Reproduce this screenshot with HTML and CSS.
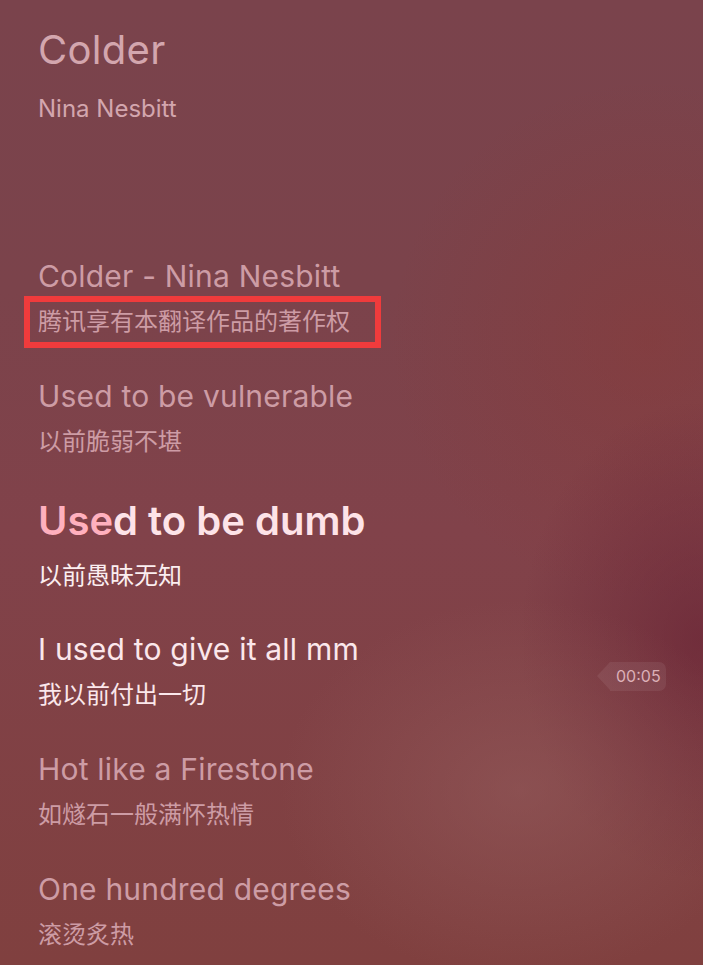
FILE: index.html
```html
<!doctype html>
<html>
<head>
  <meta charset="utf-8">
  <title>Colder</title>
  <link rel="stylesheet" href="styles.css">
</head>
<body>
  <div class="player">
    <div class="song">
      <h1 class="title">Colder</h1>
      <div class="artist">Nina Nesbitt</div>
    </div>

    <div class="lyrics">
      <div class="line">
        <div class="en">Colder - Nina Nesbitt</div>
        <div class="zh marked">腾讯享有本翻译作品的著作权</div>
      </div>
      <div class="line">
        <div class="en">Used to be vulnerable</div>
        <div class="zh">以前脆弱不堪</div>
      </div>
      <div class="line current">
        <div class="en"><span class="sung">Use</span>d to be dumb</div>
        <div class="zh">以前愚昧无知</div>
      </div>
      <div class="line next">
        <div class="en">I used to give it all mm</div>
        <div class="zh">我以前付出一切</div>
      </div>
      <div class="line">
        <div class="en">Hot like a Firestone</div>
        <div class="zh">如燧石一般满怀热情</div>
      </div>
      <div class="line">
        <div class="en">One hundred degrees</div>
        <div class="zh">滚烫炙热</div>
      </div>
    </div>

    <div class="time">00:05</div>
  </div>
</body>
</html>
```

FILE: styles.css
```css
html, body {
  margin: 0;
  height: 100%;
}
body {
  font-family: Inter, "Noto Sans CJK SC", sans-serif;
  color: #cd9ca5;
  background-color: #7c3f46;
  background-image:
    radial-gradient(ellipse 240px 190px at 520px 790px, rgba(150,95,95,0.5), rgba(150,95,95,0) 100%),
    radial-gradient(ellipse 180px 240px at 700px 640px, rgba(100,30,50,0.55), rgba(100,30,50,0) 100%),
    radial-gradient(ellipse 260px 260px at 650px 340px, rgba(140,55,50,0.4), rgba(140,55,50,0) 100%),
    linear-gradient(180deg, #7a434c 0%, #7b434b 30%, #81424a 55%, #80403f 100%);
  overflow: hidden;
}
.player {
  position: relative;
  height: 965px;
  padding-left: 38px;
}
.song {
  padding-top: 26px;
}
.title {
  margin: 0;
  font-weight: 400;
  font-size: 40px;
  line-height: 48px;
  letter-spacing: 0.3px;
  color: #d3a6ae;
}
.artist {
  margin-top: 20px;
  font-size: 24px;
  line-height: 30px;
  color: #d3a6ae;
}
.lyrics {
  margin-top: 133px;
}
.line {
  height: 120px;
}
.en {
  font-size: 30px;
  line-height: 38px;
  letter-spacing: 0.2px;
  color: #cd9ca5;
}
.zh {
  margin-top: 10px;
  font-family: "Noto Sans CJK SC", sans-serif;
  font-size: 24px;
  line-height: 30px;
  color: #cd9ca5;
}
.marked {
  position: relative;
  display: inline-block;
}
.marked::after {
  content: "";
  position: absolute;
  left: -14px;
  right: -31px;
  top: -9px;
  bottom: -13px;
  border: 6px solid #f03b3c;
}
.current {
  height: 133px;
}
.current .en {
  font-size: 40px;
  line-height: 48px;
  font-weight: 600;
  letter-spacing: 0;
  color: #fde3e8;
}
.current .en .sung {
  color: #ffb0be;
}
.current .zh {
  margin-top: 14px;
  color: #fbeef0;
}
.next .en, .next .zh {
  color: #fbe7eb;
}
.time {
  position: absolute;
  left: 610px;
  top: 662px;
  height: 29px;
  padding: 0 5px 0 6px;
  border-radius: 0 7px 7px 0;
  font-family: Inter, sans-serif;
  font-size: 16px;
  line-height: 29px;
  color: #dcb0b8;
  background: rgba(255,255,255,0.07);
}
.time::before {
  content: "";
  position: absolute;
  left: -13px;
  top: 0;
  border-style: solid;
  border-width: 14.5px 13px 14.5px 0;
  border-color: transparent rgba(255,255,255,0.07) transparent transparent;
}
```
